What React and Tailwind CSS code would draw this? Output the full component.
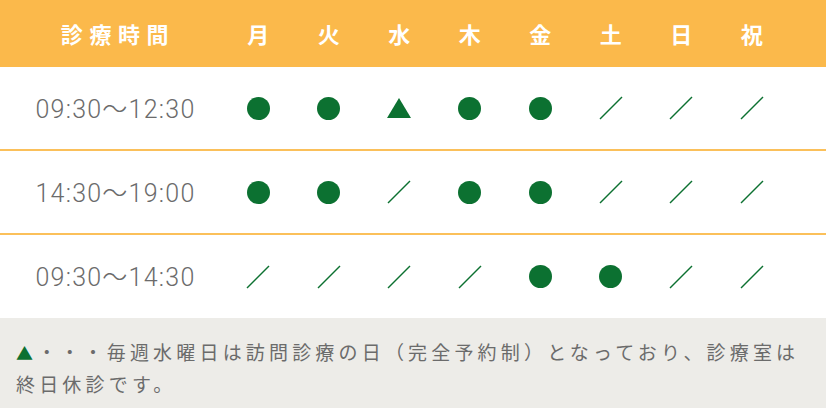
import React from "react";

const days = ["月", "火", "水", "木", "金", "土", "日", "祝"];

// o = open, t = triangle (訪問診療), x = closed
const rows = [
  { time: "09:30〜12:30", marks: ["o", "o", "t", "o", "o", "x", "x", "x"] },
  { time: "14:30〜19:00", marks: ["o", "o", "x", "o", "o", "x", "x", "x"] },
  { time: "09:30〜14:30", marks: ["x", "x", "x", "x", "o", "o", "x", "x"] },
];

function Mark({ type }) {
  if (type === "o") {
    return <span className="block w-[23px] h-[23px] rounded-full bg-[#0c7131]" />;
  }
  if (type === "t") {
    return (
      <svg width="24" height="20" viewBox="0 0 24 20">
        <polygon points="12,0 24,20 0,20" fill="#0c7131" />
      </svg>
    );
  }
  return (
    <svg width="24" height="24" viewBox="0 0 24 24">
      <line x1="1" y1="23" x2="23" y2="1" stroke="#0c7131" strokeWidth="1.4" />
    </svg>
  );
}

export default function App() {
  return (
    <div className="w-[826px] h-[408px] bg-white font-['Noto_Sans_CJK_JP',sans-serif]">
      {/* header */}
      <div className="grid grid-cols-[223px_repeat(8,70.5px)] h-[67px] bg-[#fbb94b] items-center text-white font-bold text-[22px]">
        <div className="pl-[13px] text-center tracking-[0.3em]">診療時間</div>
        {days.map((d) => (
          <div key={d} className="text-center">
            {d}
          </div>
        ))}
      </div>

      {/* rows */}
      {rows.map((r, i) => (
        <div
          key={i}
          className={
            "grid grid-cols-[223px_repeat(8,70.5px)] items-center " +
            (i < rows.length - 1 ? "h-[84px] border-b-2 border-[#fbc05a]" : "h-[83px]")
          }
        >
          <div className="pl-2 pt-[3px] text-center text-[25px] text-[#6b6b6b] tracking-[0.05em] font-['Roboto','Noto_Sans_CJK_JP',sans-serif] font-light">
            {r.time}
          </div>
          {r.marks.map((m, j) => (
            <div key={j} className="flex justify-center items-center">
              <Mark type={m} />
            </div>
          ))}
        </div>
      ))}

      {/* note */}
      <div className="h-[90px] bg-[#edece8] px-4 pt-[18px] text-[19px] leading-[31px] tracking-[0.22em] text-[#6b6b6b]">
        <span className="text-[#0c7131] text-[17px]">▲</span>・・・毎週水曜日は訪問診療の日（完全予約制）となっており、診療室は
        <br />
        終日休診です。
      </div>
    </div>
  );
}
